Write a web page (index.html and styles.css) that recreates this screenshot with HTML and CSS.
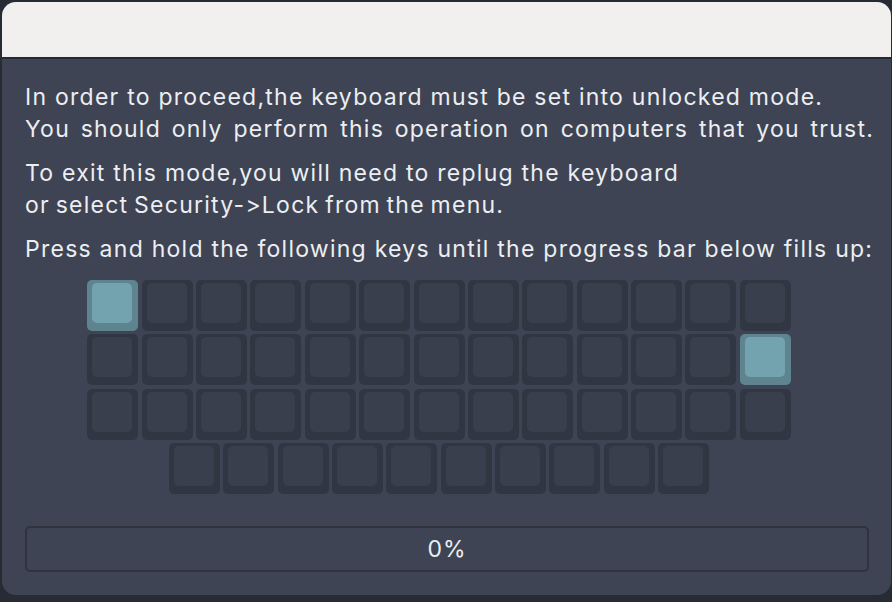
FILE: index.html
```html
<!DOCTYPE html>
<html>
<head>
<meta charset="utf-8">
<link rel="stylesheet" href="styles.css">
</head>
<body>
<div class="window">
  <div class="titlebar"></div>
  <div class="content">
    <p class="para">In order to proceed,the keyboard must be set into unlocked mode.<br><span class="wide">You should only perform this operation on computers that you trust.</span></p>
    <p class="para">To exit this mode,you will need to replug the keyboard<br><span class="narrow">or select Security-&gt;Lock from the menu.</span></p>
    <p class="para">Press and hold the following keys until the progress bar below fills up:</p>
    <div class="keyboard">
      <div class="row">
        <div class="key on"></div><div class="key"></div><div class="key"></div><div class="key"></div><div class="key"></div><div class="key"></div><div class="key"></div><div class="key"></div><div class="key"></div><div class="key"></div><div class="key"></div><div class="key"></div><div class="key"></div>
      </div>
      <div class="row">
        <div class="key"></div><div class="key"></div><div class="key"></div><div class="key"></div><div class="key"></div><div class="key"></div><div class="key"></div><div class="key"></div><div class="key"></div><div class="key"></div><div class="key"></div><div class="key"></div><div class="key on"></div>
      </div>
      <div class="row">
        <div class="key"></div><div class="key"></div><div class="key"></div><div class="key"></div><div class="key"></div><div class="key"></div><div class="key"></div><div class="key"></div><div class="key"></div><div class="key"></div><div class="key"></div><div class="key"></div><div class="key"></div>
      </div>
      <div class="row">
        <div class="key"></div><div class="key"></div><div class="key"></div><div class="key"></div><div class="key"></div><div class="key"></div><div class="key"></div><div class="key"></div><div class="key"></div><div class="key"></div>
      </div>
    </div>
    <div class="progress">0%</div>
  </div>
</div>
</body>
</html>
```

FILE: styles.css
```css
html, body {
  margin: 0;
  padding: 0;
  background: #272b34;
  width: 892px;
  height: 602px;
  overflow: hidden;
}
.window {
  position: relative;
  margin: 2px 0 0 2px;
  width: 889px;
  height: 593px;
  border-radius: 14px;
  background: #3e4454;
  overflow: hidden;
  display: flex;
  flex-direction: column;
  font-family: Inter, "Noto Sans", sans-serif;
  color: #eceef1;
}
.titlebar {
  height: 55px;
  background: #f1f0ee;
  border-bottom: 2px solid #252932;
  flex: none;
}
.content {
  padding: 22px 0 0 23px;
  display: flex;
  flex-direction: column;
}
.para {
  margin: 0 0 12px 0;
  font-size: 23px;
  line-height: 32px;
  letter-spacing: 1.25px;
  white-space: nowrap;
}
.wide {
  word-spacing: 3px;
}
.narrow {
  word-spacing: -2px;
}
.keyboard {
  margin: 3px 0 0 62px;
  width: 704px;
  display: flex;
  flex-direction: column;
  align-items: center;
  gap: 3.4px;
}
.row {
  display: flex;
  gap: 3.4px;
}
.key {
  width: 51px;
  height: 51px;
  box-sizing: border-box;
  border-radius: 5px;
  background: #313643;
  padding: 3px 5.5px 8px 5px;
}
.key::before {
  content: "";
  display: block;
  width: 40px;
  height: 40px;
  border-radius: 5px;
  background: #3a3f4e;
}
.key.on {
  background: #5e8490;
}
.key.on::before {
  background: #74a3b0;
}
.progress {
  margin-top: 32px;
  width: 844px;
  height: 46px;
  box-sizing: border-box;
  border: 2px solid #2f333e;
  border-radius: 5px;
  display: flex;
  align-items: center;
  justify-content: center;
  font-size: 23px;
  letter-spacing: 1px;
}
```
